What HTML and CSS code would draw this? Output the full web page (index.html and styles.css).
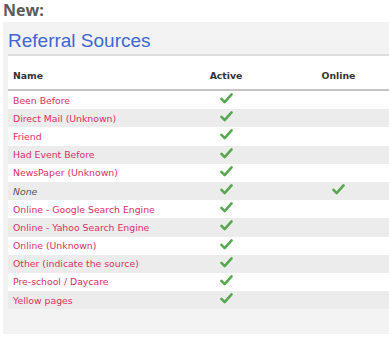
FILE: index.html
```html
<!DOCTYPE html>
<html>
<head>
<meta charset="utf-8">
<link rel="stylesheet" href="styles.css">
</head>
<body>
<h3 class="new">New:</h3>
<div class="panel">
  <h2 class="title">Referral Sources</h2>
  <table class="grid">
    <thead>
      <tr><th class="c-name">Name</th><th class="c-act">Active</th><th class="c-onl">Online</th></tr>
    </thead>
    <tbody>
      <tr><td class="c-name">Been Before</td><td class="c-act"><svg class="chk" viewBox="0 0 14 12"><path d="M1.5 6.5 L5 10 L12.5 1.5"/></svg></td><td class="c-onl"></td></tr>
      <tr><td class="c-name">Direct Mail (Unknown)</td><td class="c-act"><svg class="chk" viewBox="0 0 14 12"><path d="M1.5 6.5 L5 10 L12.5 1.5"/></svg></td><td class="c-onl"></td></tr>
      <tr><td class="c-name">Friend</td><td class="c-act"><svg class="chk" viewBox="0 0 14 12"><path d="M1.5 6.5 L5 10 L12.5 1.5"/></svg></td><td class="c-onl"></td></tr>
      <tr><td class="c-name">Had Event Before</td><td class="c-act"><svg class="chk" viewBox="0 0 14 12"><path d="M1.5 6.5 L5 10 L12.5 1.5"/></svg></td><td class="c-onl"></td></tr>
      <tr><td class="c-name">NewsPaper (Unknown)</td><td class="c-act"><svg class="chk" viewBox="0 0 14 12"><path d="M1.5 6.5 L5 10 L12.5 1.5"/></svg></td><td class="c-onl"></td></tr>
      <tr><td class="c-name none">None</td><td class="c-act"><svg class="chk" viewBox="0 0 14 12"><path d="M1.5 6.5 L5 10 L12.5 1.5"/></svg></td><td class="c-onl"><svg class="chk" viewBox="0 0 14 12"><path d="M1.5 6.5 L5 10 L12.5 1.5"/></svg></td></tr>
      <tr><td class="c-name">Online - Google Search Engine</td><td class="c-act"><svg class="chk" viewBox="0 0 14 12"><path d="M1.5 6.5 L5 10 L12.5 1.5"/></svg></td><td class="c-onl"></td></tr>
      <tr><td class="c-name">Online - Yahoo Search Engine</td><td class="c-act"><svg class="chk" viewBox="0 0 14 12"><path d="M1.5 6.5 L5 10 L12.5 1.5"/></svg></td><td class="c-onl"></td></tr>
      <tr><td class="c-name">Online (Unknown)</td><td class="c-act"><svg class="chk" viewBox="0 0 14 12"><path d="M1.5 6.5 L5 10 L12.5 1.5"/></svg></td><td class="c-onl"></td></tr>
      <tr><td class="c-name">Other (indicate the source)</td><td class="c-act"><svg class="chk" viewBox="0 0 14 12"><path d="M1.5 6.5 L5 10 L12.5 1.5"/></svg></td><td class="c-onl"></td></tr>
      <tr><td class="c-name">Pre-school / Daycare</td><td class="c-act"><svg class="chk" viewBox="0 0 14 12"><path d="M1.5 6.5 L5 10 L12.5 1.5"/></svg></td><td class="c-onl"></td></tr>
      <tr><td class="c-name">Yellow pages</td><td class="c-act"><svg class="chk" viewBox="0 0 14 12"><path d="M1.5 6.5 L5 10 L12.5 1.5"/></svg></td><td class="c-onl"></td></tr>
    </tbody>
  </table>
</div>
</body>
</html>
```
FILE: styles.css
```css
html, body {
  margin: 0;
  padding: 0;
  background: #ffffff;
  overflow: hidden;
}
.new {
  margin: 0;
  padding: 0 0 0 3px;
  height: 22px;
  font-family: "Open Sans", sans-serif;
  font-weight: 700;
  font-size: 16px;
  line-height: 21px;
  color: #5a5a5a;
}
.panel {
  margin-left: 3px;
  background: #f3f3f3;
  padding: 0 0 25px 5px;
}
.title {
  margin: 0;
  padding: 7px 0 0 0;
  height: 25px;
  font-family: "Liberation Sans", Arial, sans-serif;
  font-weight: 400;
  font-size: 19px;
  line-height: 24px;
  color: #3f66d4;
  border-bottom: 2px solid #dddddd;
}
.grid {
  width: 381px;
  border-collapse: collapse;
  font-family: "DejaVu Sans", Verdana, sans-serif;
  font-size: 9.3px;
}
.grid th {
  height: 34px;
  background: #ffffff;
  font-weight: 700;
  color: #333333;
  border-bottom: 2px solid #c4c4c4;
  padding: 6px 0 0 0;
  box-sizing: border-box;
}
.grid td {
  height: 18.2px;
  padding: 0;
  color: #d92f66;
  vertical-align: middle;
}
.grid tbody tr:nth-child(odd) td { background: #ffffff; }
.grid tbody tr:nth-child(even) td { background: #ececec; }
.c-name {
  width: 160px;
  text-align: left;
  padding-left: 5px !important;
}
.c-act {
  width: 106px;
  text-align: center;
}
.c-onl {
  text-align: center;
  padding-left: 9px !important;
}
.none {
  font-style: italic;
  color: #555555 !important;
}
.chk {
  display: block;
  width: 13px;
  height: 11px;
  margin: 0 auto 3px;
  fill: none;
  stroke: #56a84f;
  stroke-width: 2.8;
  stroke-linecap: round;
  stroke-linejoin: round;
}
```
